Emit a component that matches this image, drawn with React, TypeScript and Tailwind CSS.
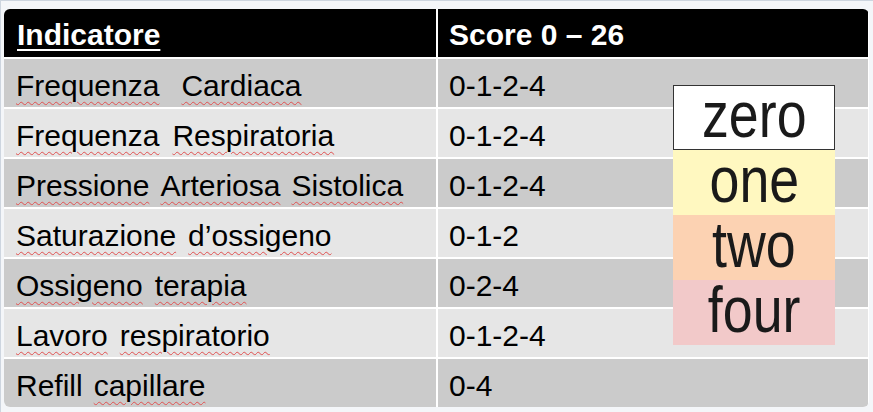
import React from "react";

const rows: { label: string[]; score: string; gap: string }[] = [
  { label: ["Frequenza", "Cardiaca"], score: "0-1-2-4", gap: "gap-[22px]" },
  { label: ["Frequenza", "Respiratoria"], score: "0-1-2-4", gap: "gap-[13px]" },
  { label: ["Pressione", "Arteriosa", "Sistolica"], score: "0-1-2-4", gap: "gap-[11px]" },
  { label: ["Saturazione", "d’ossigeno"], score: "0-1-2", gap: "gap-[12px]" },
  { label: ["Ossigeno", "terapia"], score: "0-2-4", gap: "gap-[12px]" },
  { label: ["Lavoro", "respiratorio"], score: "0-1-2-4", gap: "gap-[12px]" },
  { label: ["Refill", "capillare"], score: "0-4", gap: "gap-[11px]" },
];

// parole "sottolineate" dal correttore ortografico
const spell = new Set(["Frequenza", "Cardiaca", "Respiratoria", "Pressione", "Arteriosa", "Sistolica", "Saturazione", "d’ossigeno", "Ossigeno", "terapia", "Lavoro", "respiratorio", "capillare"]);

function Word({ w }: { w: string }) {
  if (!spell.has(w)) return <span>{w}</span>;
  return <span className="underline decoration-wavy decoration-[#e05050] decoration-1 underline-offset-[5px]">{w}</span>;
}

const legend = [
  { text: "zero", cls: "bg-white border border-[#333]" },
  { text: "one", cls: "bg-[#fff8c0]" },
  { text: "two", cls: "bg-[#fcd2b2]" },
  { text: "four", cls: "bg-[#f2c9c9]" },
];

export default function App() {
  return (
    <div className="w-[873px] h-[412px] bg-[#f4f6f9] border-t border-l border-[#cdd5df] pt-[8px] pl-[3px] font-['Liberation_Sans',Arial,sans-serif] overflow-hidden">
      <div className="relative w-[865px] h-[398px] bg-white grid grid-cols-[432px_430px] gap-[2px] rounded-[6px] overflow-hidden">
        <div className="bg-black text-white font-bold text-[30px] pl-[13px] pt-[2px] flex items-center h-[48px]">
          <span className="underline decoration-white decoration-2 underline-offset-[4px]">Indicatore</span>
        </div>
        <div className="bg-black text-white font-bold text-[30px] pl-[11px] pt-[2px] flex items-center h-[48px]">Score 0 – 26</div>
        {rows.map((r, i) => (
          <React.Fragment key={i}>
            <div className={`${i % 2 === 0 ? "bg-[#cbcbcb]" : "bg-[#e6e6e6]"} ${r.gap} h-[48px] pl-[12px] pt-[4px] flex items-center text-[30px] text-black`}>
              {r.label.map((w, j) => (
                <Word key={j} w={w} />
              ))}
            </div>
            <div className={`${i % 2 === 0 ? "bg-[#cbcbcb]" : "bg-[#e6e6e6]"} h-[48px] pl-[11px] pt-[4px] flex items-center text-[30px] text-black`}>
              {r.score}
            </div>
          </React.Fragment>
        ))}

        <div className="absolute left-[669px] top-[76px] w-[162px] flex flex-col">
          {legend.map((l) => (
            <div key={l.text} className={`${l.cls} h-[65px] flex items-center justify-center`}>
              <span className="text-[64px] leading-[56px] text-[#1a1a1a] scale-x-[0.84] pb-[6px]">{l.text}</span>
            </div>
          ))}
        </div>
      </div>
    </div>
  );
}
